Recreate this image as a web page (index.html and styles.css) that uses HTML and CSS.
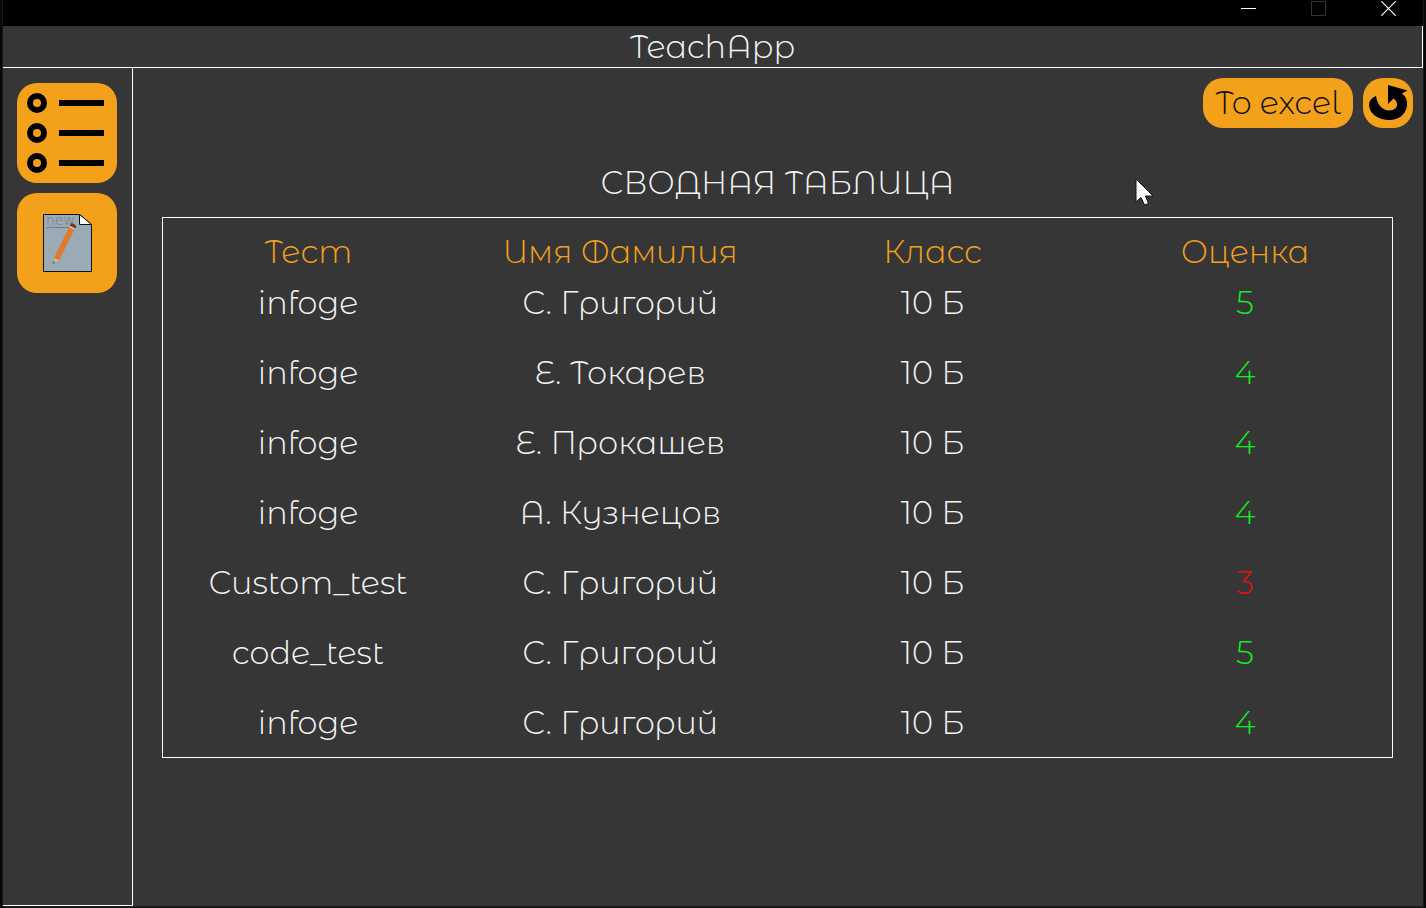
FILE: index.html
```html
<!DOCTYPE html>
<html lang="ru">
<head>
<meta charset="utf-8">
<title>TeachApp</title>
<link rel="stylesheet" href="styles.css">
</head>
<body>
<div class="window">
  <div class="titlebar">
    <button class="winbtn" type="button" aria-label="Minimize"><svg width="15" height="15" viewBox="0 0 15 15"><path d="M0 7.5H15" stroke="#fff"/></svg></button>
    <button class="winbtn" type="button" aria-label="Maximize" disabled><svg width="15" height="15" viewBox="0 0 15 15"><path d="M.5 .5H14.5V14.5H.5Z" fill="none" stroke="#333"/></svg></button>
    <button class="winbtn" type="button" aria-label="Close"><svg width="15" height="15" viewBox="0 0 15 15"><path d="M.3 .3L14.7 14.7M14.7 .3L.3 14.7" stroke="#fff" stroke-width="1.2"/></svg></button>
  </div>
  <header class="header"><h1 class="brand">TeachApp</h1></header>
  <div class="body">
    <nav class="sidebar">
      <button class="tile" type="button" aria-label="List">
        <svg width="100" height="100" viewBox="0 0 100 100" fill="none" stroke="#000" stroke-width="6">
          <circle cx="20" cy="20" r="7"/><circle cx="20" cy="50" r="7"/><circle cx="20" cy="80" r="7"/>
          <path d="M42 20H87M42 50H87M42 80H87"/>
        </svg>
      </button>
      <button class="tile" type="button" aria-label="New test">
        <svg width="100" height="100" viewBox="0 0 100 100">
          <path d="M26.5 21.5H62.5L74.500 31.500V78.500H26.500Z" fill="#9aabb5" stroke="#111"/>
          <path d="M62.500 21.500V31.500H74.500Z" fill="#fff" stroke="#111"/>
          <text class="tile-text" x="29" y="32">new</text>
          <path d="M29 35.500C32 33.500 34 34.500 38 34.500H58" fill="none" stroke="#6f7c84"/>
          <path d="M52.500 33.500L57.500 36L42 67.500L37 65Z" fill="#e3772b"/>
          <path d="M53.300 31.500L58.500 34L57.300 36.500L52.200 34Z" fill="#e8e0d8"/>
          <path d="M54 30.500Q57 29.500 59.500 34L58 35.500L52.500 32.800Z" fill="#6b3a33"/>
          <path d="M37 65L42 67.500L36.500 70.500Z" fill="#e2b184"/>
          <path d="M36 67.500L38.500 69.500L35.500 71.500Z" fill="#737b80"/>
        </svg>
      </button>
    </nav>
    <main class="main">
      <div class="toolbar">
        <button class="btn btn-wide" type="button">To excel</button>
        <button class="btn btn-round" type="button" aria-label="Refresh">
          <svg width="50" height="50" viewBox="0 0 50 50"><path d="M25 7L44.500 12.500L39 15.500C43 18.500 44.500 22.500 44 27.500C43 37 35 42.500 25 42C14 41.500 6 35 6 26.500C6.500 22.500 8.500 20 13 18C14 25 18 32 26 32.500C31.500 32.500 34.500 29.500 34 25.500C33.500 23.500 32.500 21.500 30.500 20.500L25 26Z"/></svg>
        </button>
      </div>
      <h2 class="title" id="summary">СВОДНАЯ ТАБЛИЦА</h2>
      <div class="panel">
        <table class="grades" aria-labelledby="summary">
          <thead><tr><th class="c-test">Тест</th><th class="c-name">Имя Фамилия</th><th class="c-class">Класс</th><th class="c-grade">Оценка</th></tr></thead>
          <tbody>
            <tr><td class="c-test">infoge</td><td>С. Григорий</td><td>10 Б</td><td class="good">5</td></tr>
            <tr><td class="c-test">infoge</td><td>Е. Токарев</td><td>10 Б</td><td class="good">4</td></tr>
            <tr><td class="c-test">infoge</td><td>Е. Прокашев</td><td>10 Б</td><td class="good">4</td></tr>
            <tr><td class="c-test">infoge</td><td>А. Кузнецов</td><td>10 Б</td><td class="good">4</td></tr>
            <tr><td class="c-test">Custom_test</td><td>С. Григорий</td><td>10 Б</td><td class="bad">3</td></tr>
            <tr><td class="c-test">code_test</td><td>С. Григорий</td><td>10 Б</td><td class="good">5</td></tr>
            <tr><td class="c-test">infoge</td><td>С. Григорий</td><td>10 Б</td><td class="good">4</td></tr>
          </tbody>
        </table>
      </div>
    </main>
  </div>
</div>
<svg class="cursor" width="20" height="30" viewBox="0 0 20 30"><path d="M1 1V24L6 19.500L9.500 27L13.500 25.500L10.500 18H18Z" fill="#fff" stroke="#111"/></svg>
</body>
</html>
```
FILE: styles.css
```css
* { box-sizing: border-box; }

body {
  margin: 0;
  background: #080808;
  color: #f4f4f4;
  font-family: "Montserrat Alternates", Inter, "Open Sans", sans-serif;
  font-size: 32px;
  font-weight: 300;
  line-height: 40px;
}

button {
  margin: 0;
  padding: 0;
  border: 0;
  background: none;
  color: inherit;
  font: inherit;
}

svg { display: block; }

.window {
  display: flex;
  flex-direction: column;
  min-height: 100vh;
  margin: 0 3px;
  border-bottom: 2px solid #191919;
  background: #363636;
  box-shadow: 0 0 0 1px #191919;
}

.titlebar {
  display: flex;
  justify-content: flex-end;
  height: 26px;
  background: #000;
}

.winbtn {
  display: flex;
  justify-content: center;
  width: 70px;
  padding-top: 1px;
}

.header {
  height: 42px;
  padding-top: 1px;
  border-right: 1px solid #fff;
  border-bottom: 1px solid #fff;
}

.brand,
.title {
  margin: 0;
  font-size: inherit;
  font-weight: inherit;
  text-align: center;
}

.body {
  display: flex;
  flex: 1;
}

.sidebar {
  display: flex;
  flex-direction: column;
  gap: 10px;
  width: 130px;
  padding: 15px 14px;
  border-right: 1px solid #fff;
  border-bottom: 1px solid #fff;
}

.tile {
  width: 100px;
  height: 100px;
  border-radius: 20px;
  background: #f3a11b;
}

.tile-text {
  fill: #6f7c84;
  font-family: "DejaVu Sans", sans-serif;
  font-size: 14px;
  font-weight: 200;
}

.main {
  flex: 1;
  padding: 10px 30px 30px 29px;
}

.toolbar {
  display: flex;
  justify-content: flex-end;
  gap: 10px;
  margin-right: -20px;
}

.btn {
  height: 50px;
  border-radius: 20px;
  background: #f3a11b;
  color: #111;
}

.btn-wide { width: 150px; }
.btn-round { width: 50px; }

.title { margin: 35px 0 14px; }

.panel {
  padding-left: 4px;
  border: 1px solid #fff;
}

.grades {
  width: 100%;
  border-collapse: collapse;
  table-layout: fixed;
  text-align: center;
}

.grades th {
  height: 49px;
  padding: 14px 0 0;
  color: #f3a11b;
  font-weight: inherit;
  line-height: 35px;
  vertical-align: bottom;
}

.grades td {
  height: 70px;
  padding: 2px 0 0;
}

.grades thead th { padding-top: 18px; line-height: 31px; }

.grades .c-test {
  width: 25%;
  padding-right: 24px;
}

.c-name { width: 24%; }
.c-class { width: 27%; }
.c-grade { width: 24%; }

.grades .good { color: #12ee1c; }
.grades .bad { color: #e01212; }

.cursor {
  position: absolute;
  top: 178px;
  left: 1135px;
}
```
